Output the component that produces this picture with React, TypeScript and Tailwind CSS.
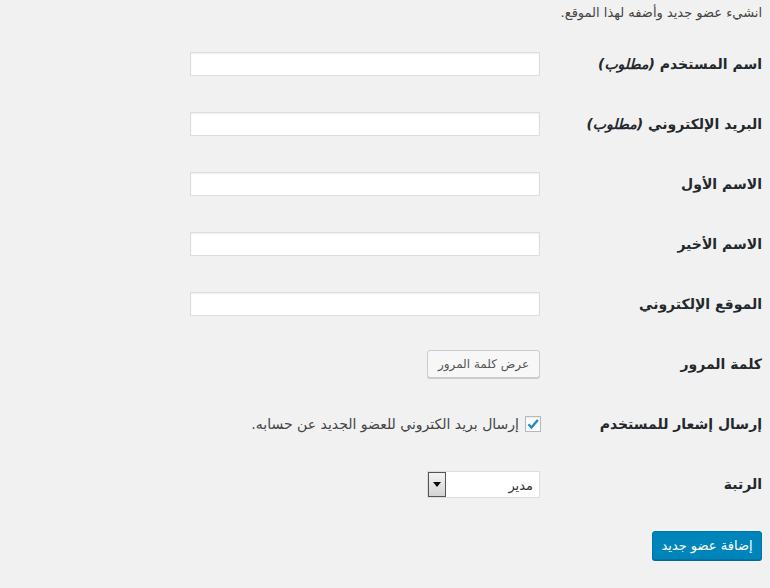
import { useState } from "react";

const font = { fontFamily: '"DejaVu Sans", Tahoma, sans-serif' };

interface RowProps {
  label: React.ReactNode;
  children: React.ReactNode;
}

function Row({ label, children }: RowProps) {
  return (
    <div className="flex h-[60px] items-center">
      <div className="w-[222px] shrink-0 text-[14px] font-bold text-[#23282d]">
        {label}
      </div>
      <div className="flex items-center">{children}</div>
    </div>
  );
}

function TextInput() {
  return (
    <input
      type="text"
      className="h-[24px] w-[350px] border border-[#ddd] bg-white px-1 text-[13px] shadow-[inset_0_1px_2px_rgba(0,0,0,0.07)] outline-none"
    />
  );
}

export default function App() {
  const [notify, setNotify] = useState(true);

  return (
    <div
      dir="rtl"
      style={font}
      className="min-h-[588px] w-[770px] bg-[#f1f1f1] pr-[8px] text-[#444]"
    >
      <p className="flex h-[34px] items-start pt-[3px] text-[13px] text-[#444]">
        انشيء عضو جديد وأضفه لهذا الموقع.
      </p>
      <Row
        label={
          <>
            اسم المستخدم <span className="italic">(مطلوب)</span>
          </>
        }
      >
        <TextInput />
      </Row>
      <Row
        label={
          <>
            البريد الإلكتروني <span className="italic">(مطلوب)</span>
          </>
        }
      >
        <TextInput />
      </Row>
      <Row label="الاسم الأول">
        <TextInput />
      </Row>
      <Row label="الاسم الأخير">
        <TextInput />
      </Row>
      <Row label="الموقع الإلكتروني">
        <TextInput />
      </Row>
      <Row label="كلمة المرور">
        <button className="h-[28px] w-[113px] rounded-[3px] border border-[#ccc] bg-[#f7f7f7] text-[12px] text-[#555] shadow-[0_1px_0_#ccc]">
          عرض كلمة المرور
        </button>
      </Row>
      <Row label="إرسال إشعار للمستخدم">
        <label className="flex items-center gap-[6px] text-[14px] text-[#444]">
          <span
            onClick={() => setNotify(!notify)}
            className="mr-[-1px] flex h-[16px] w-[16px] items-center justify-center border border-[#b4b9be] bg-white shadow-[inset_0_1px_2px_rgba(0,0,0,0.1)]"
          >
            {notify && (
              <svg width="14" height="14" viewBox="0 0 14 14">
                <path
                  d="M2.5 7.2 L5.5 10.5 L11.8 3"
                  fill="none"
                  stroke="#1e8cbe"
                  strokeWidth="2.4"
                />
              </svg>
            )}
          </span>
          إرسال بريد الكتروني للعضو الجديد عن حسابه.
        </label>
      </Row>
      <Row label="الرتبة">
        <div className="flex h-[27px] w-[113px] items-stretch border border-[#ddd] bg-white">
          <span className="flex-1 pr-[6px] pt-[4px] text-[13px] text-[#333]">
            مدير
          </span>
          <span className="flex w-[18px] items-center justify-center border border-[#555] bg-gradient-to-b from-[#f4f4f4] to-[#d4d4d4]">
            <svg width="8" height="5" viewBox="0 0 8 5">
              <path d="M0 0 L8 0 L4 5 Z" fill="#000" />
            </svg>
          </span>
        </div>
      </Row>
      <div className="pt-[17px]">
        <button className="h-[29px] w-[110px] rounded-[3px] border border-[#0073aa] bg-[#0085ba] text-[13px] text-white shadow-[0_1px_0_#006799]">
          إضافة عضو جديد
        </button>
      </div>
    </div>
  );
}
